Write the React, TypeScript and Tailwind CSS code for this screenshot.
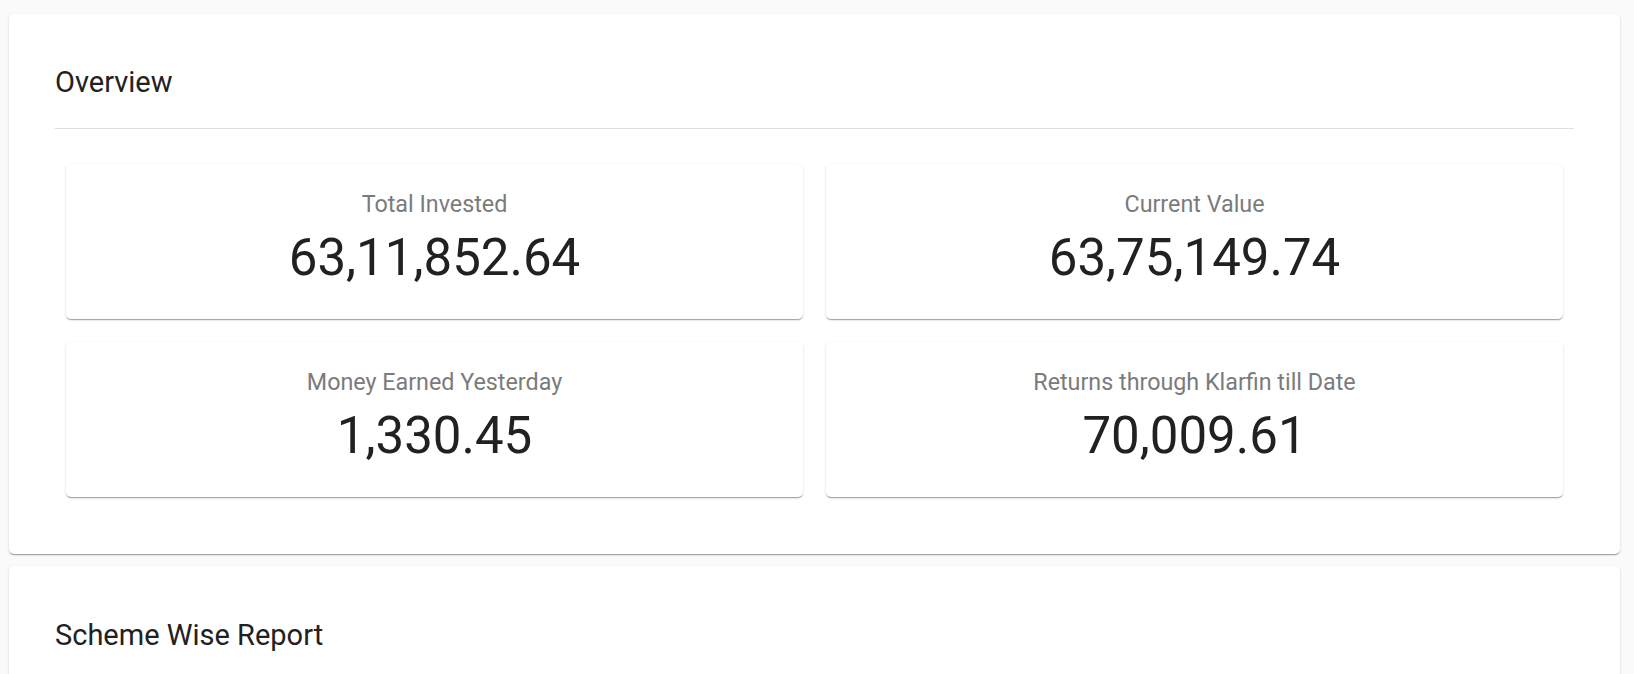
import React from "react";

const paperShadow =
  "shadow-[0_2px_1px_-1px_rgba(0,0,0,0.2),0_1px_1px_0_rgba(0,0,0,0.14),0_1px_3px_0_rgba(0,0,0,0.12)]";

function Stat({ label, value }: { label: string; value: string }) {
  return (
    <div
      className={`bg-white rounded-[5px] h-[155px] pt-[24px] flex flex-col items-center ${paperShadow}`}
    >
      <div className="text-[23.3px] leading-[33px] text-[#7b7b7b]">{label}</div>
      <div className="mt-[7px] text-[51px] leading-[60px] text-[#212121]">{value}</div>
    </div>
  );
}

export default function App() {
  return (
    <div
      className="h-[674px] overflow-hidden bg-[#fafafa] pt-[14px] pl-[9px] pr-[14px]"
      style={{ fontFamily: "Roboto, 'Noto Sans', Arial, sans-serif" }}
    >
      <div className={`bg-white rounded-[5px] px-[46px] pt-[51px] pb-[57px] ${paperShadow}`}>
        <div className="text-[29px] leading-[34px] text-[#212121]">Overview</div>
        <div className="mt-[29px] h-px bg-[#e0e0e0]" />
        <div className="mt-[35px] mx-[11px] grid grid-cols-2 gap-[23px]">
          <Stat label="Total Invested" value="63,11,852.64" />
          <Stat label="Current Value" value="63,75,149.74" />
          <Stat label="Money Earned Yesterday" value="1,330.45" />
          <Stat label="Returns through Klarfin till Date" value="70,009.61" />
        </div>
      </div>
      <div className={`mt-[12px] bg-white rounded-[5px] px-[46px] pt-[52px] h-[200px] ${paperShadow}`}>
        <div className="text-[29px] leading-[34px] text-[#212121]">Scheme Wise Report</div>
      </div>
    </div>
  );
}
